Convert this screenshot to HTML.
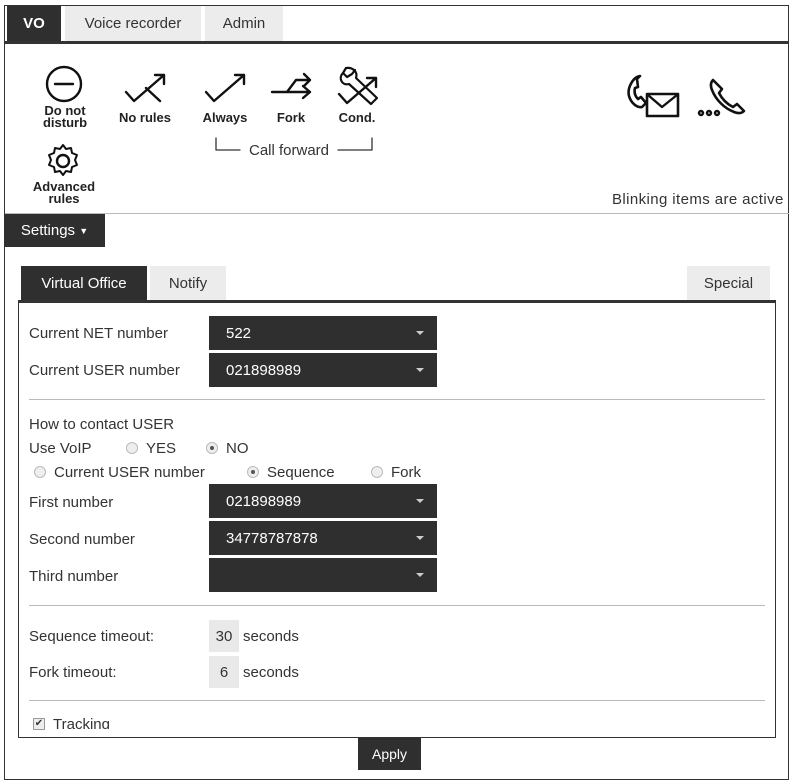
<!DOCTYPE html>
<html><head><meta charset="utf-8"><style>
*{box-sizing:border-box;margin:0;padding:0}
body{width:794px;height:783px;background:#fff;font-family:"Liberation Sans",sans-serif;color:#333;position:relative;overflow:hidden;font-size:15px}
.a{position:absolute}
.dk{background:#2f2f2f;color:#fff}
.lt{background:#ececec;color:#333}
.tab{position:absolute;display:flex;align-items:center;justify-content:center;font-size:15px}
.lbl{position:absolute;font-size:13px;font-weight:bold;color:#222;text-align:center;line-height:12px}
.sel{position:absolute;left:209px;width:228px;background:#2f2f2f;color:#fff;padding-left:17px;display:flex;align-items:center;font-size:15px}
.sel:after{content:"";position:absolute;right:13px;top:50%;margin-top:-2px;border-left:4px solid transparent;border-right:4px solid transparent;border-top:4px solid #ccc}
.t{position:absolute;font-size:15px;color:#333}
.hr{position:absolute;left:29px;width:736px;height:1px;background:#bbb}
.rad{position:absolute;width:12px;height:12px;border-radius:50%;border:1px solid #bbb;background:#eee}
.rad.on:after{content:"";position:absolute;left:3px;top:3px;width:4px;height:4px;border-radius:50%;background:#555}
.box{position:absolute;left:209px;width:30px;height:32px;background:#e9e9e9;display:flex;align-items:center;justify-content:center;font-size:15px}
</style></head><body>
<div class="a" style="left:4px;top:5px;width:785px;height:775px;border:1px solid #333"></div>
<div class="tab dk" style="left:7px;top:6px;width:54px;height:35px;font-weight:bold">VO</div>
<div class="tab lt" style="left:65px;top:6px;width:136px;height:35px">Voice recorder</div>
<div class="tab lt" style="left:205px;top:6px;width:78px;height:35px">Admin</div>
<div class="a" style="left:5px;top:41px;width:784px;height:3px;background:#333"></div>

<svg class="a" style="left:0;top:0" width="794" height="210" fill="none" stroke="#111" stroke-width="2.4" stroke-linecap="round" stroke-linejoin="round">
<circle cx="64" cy="84" r="17"/><line x1="55" y1="84" x2="73" y2="84"/>
<path d="M126 92 L134 101 L164 75 M155 75 H164 V84 M146 88 L160 101"/>
<path d="M206 92 L214 101 L244 75 M235 75 H244 V84"/>
<path d="M272 92 H310 M303 86 L310 92 L303 98 M287 92 L296 80 H310 M304 74 L310 80 L304 86"/>
<path d="M339 94 L347 103 L376 78 M367 78 H376 V87"/>
<path d="M346 68 L343 73 L347 77 L352 74 L355 70 M343 73 C338 78 342 86 349 84 L371 104 L377 98 L356 78 C358 72 353 67 346 68" stroke-width="2.2"/>
<circle cx="63" cy="161" r="6"/>
<path d="M63 145 l3 4 l5 -1 l1 5 l5 2 l-2 5 l2 5 l-5 2 l-1 5 l-5 -1 l-3 4 l-3 -4 l-5 1 l-1 -5 l-5 -2 l2 -5 l-2 -5 l5 -2 l1 -5 l5 1 Z" stroke-width="2"/>
<path d="M216 138 V150 H240 M338 150 H372 V138" stroke="#333" stroke-width="1.3"/>
<path d="M640 76 c-7 1 -13 12 -11 20 c2 7 8 12 13 11 l4 -4 l-5 -6 l-3 2 c-3 -3 -4 -7 -3 -11 l3 -1 l-1 -8 z" stroke-width="2.6"/>
<rect x="647" y="94" width="31" height="22" stroke-width="2.6"/><path d="M648 95 L662 107 L677 95" stroke-width="2.4"/>
<path d="M713 80 c-2 2 -3 5 -1 10 c4 10 12 18 22 22 c5 2 8 1 10 -1 l-7 -7 l-4 3 c-6 -3 -11 -8 -14 -14 l3 -4 z" stroke-width="2.6"/>
<circle cx="701" cy="113" r="2" stroke-width="2.4"/><circle cx="709" cy="113" r="2" stroke-width="2.4"/><circle cx="717" cy="113" r="2" stroke-width="2.4"/>
</svg>
<div class="lbl" style="left:34px;top:105px;width:62px">Do not<br>disturb</div>
<div class="lbl" style="left:110px;top:112px;width:70px">No rules</div>
<div class="lbl" style="left:195px;top:112px;width:60px">Always</div>
<div class="lbl" style="left:266px;top:112px;width:50px">Fork</div>
<div class="lbl" style="left:330px;top:112px;width:54px">Cond.</div>
<div class="lbl" style="left:28px;top:181px;width:72px">Advanced<br>rules</div>
<div class="t" style="left:249px;top:142px">Call forward</div>
<div class="t" style="left:612px;top:191px;letter-spacing:0.4px">Blinking items are active</div>
<div class="a" style="left:5px;top:213px;width:784px;height:1px;background:#bbb"></div>
<div class="tab dk" style="left:4px;top:214px;width:101px;height:33px">Settings&nbsp;<span style="font-size:9px">▼</span></div>

<div class="tab dk" style="left:21px;top:266px;width:126px;height:35px">Virtual Office</div>
<div class="tab lt" style="left:150px;top:266px;width:76px;height:35px">Notify</div>
<div class="tab lt" style="left:687px;top:266px;width:83px;height:35px">Special</div>
<div class="a" style="left:18px;top:300px;width:758px;height:438px;border:1px solid #333;border-top:3px solid #333"></div>

<div class="t" style="left:29px;top:325px">Current NET number</div>
<div class="sel" style="top:316px;height:34px">522</div>
<div class="t" style="left:29px;top:362px">Current USER number</div>
<div class="sel" style="top:353px;height:34px">021898989</div>
<div class="hr" style="top:399px"></div>
<div class="t" style="left:29px;top:416px">How to contact USER</div>
<div class="t" style="left:29px;top:440px">Use VoIP</div>
<div class="rad" style="left:126px;top:442px"></div><div class="t" style="left:146px;top:440px">YES</div>
<div class="rad on" style="left:206px;top:442px"></div><div class="t" style="left:226px;top:440px">NO</div>
<div class="rad" style="left:34px;top:466px"></div><div class="t" style="left:54px;top:464px">Current USER number</div>
<div class="rad on" style="left:247px;top:466px"></div><div class="t" style="left:267px;top:464px">Sequence</div>
<div class="rad" style="left:371px;top:466px"></div><div class="t" style="left:391px;top:464px">Fork</div>
<div class="t" style="left:29px;top:494px">First number</div>
<div class="sel" style="top:484px;height:34px">021898989</div>
<div class="t" style="left:29px;top:531px">Second number</div>
<div class="sel" style="top:521px;height:34px">34778787878</div>
<div class="t" style="left:29px;top:568px">Third number</div>
<div class="sel" style="top:558px;height:34px"></div>
<div class="hr" style="top:605px"></div>
<div class="t" style="left:29px;top:628px">Sequence timeout:</div>
<div class="box" style="top:620px">30</div><div class="t" style="left:243px;top:628px">seconds</div>
<div class="t" style="left:29px;top:664px">Fork timeout:</div>
<div class="box" style="top:656px">6</div><div class="t" style="left:243px;top:664px">seconds</div>
<div class="hr" style="top:700px"></div>
<div class="a" style="left:33px;top:718px;width:12px;height:12px;border:1px solid #999;background:#eee;font-size:10px;line-height:10px;text-align:center">✔</div>
<div class="a" style="left:53px;top:716px;height:13px;overflow:hidden;font-size:15px;line-height:18px">Tracking</div>
<div class="tab dk" style="left:358px;top:738px;width:63px;height:32px;font-size:14px">Apply</div>
</body></html>
